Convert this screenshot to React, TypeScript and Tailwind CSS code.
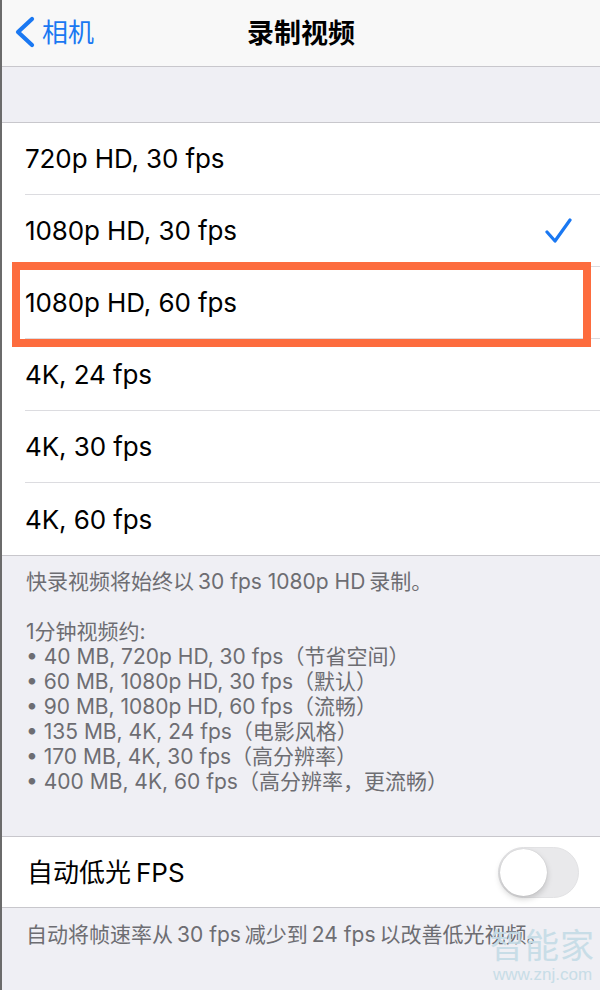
const font = "font-[Inter,'Noto_Sans_CJK_SC',sans-serif]";

const options = [
  { label: '720p HD, 30 fps', checked: false },
  { label: '1080p HD, 30 fps', checked: true },
  { label: '1080p HD, 60 fps', checked: false },
  { label: '4K, 24 fps', checked: false },
  { label: '4K, 30 fps', checked: false },
  { label: '4K, 60 fps', checked: false },
];

const sizes = [
  '40 MB, 720p HD, 30 fps（节省空间）',
  '60 MB, 1080p HD, 30 fps（默认）',
  '90 MB, 1080p HD, 60 fps（流畅）',
  '135 MB, 4K, 24 fps（电影风格）',
  '170 MB, 4K, 30 fps（高分辨率）',
  '400 MB, 4K, 60 fps（高分辨率，更流畅）',
];

// latin run between CJK chars gets a small gap like iOS does
function L({ children }: { children: React.ReactNode }) {
  return <span className="mx-[4px]">{children}</span>;
}

function Check() {
  return (
    <svg width="27" height="26" viewBox="0 0 27 26" fill="none">
      <path d="M2 14 L10 23 L25 2" stroke="#1a78f2" strokeWidth="3.2" strokeLinecap="round" strokeLinejoin="round" />
    </svg>
  );
}

function Toggle() {
  return (
    <div className="w-[81px] h-[51px] rounded-full bg-[#e9e9eb] border border-[#e2e2e4] p-[1px] flex items-center">
      <div className="w-[47px] h-[47px] rounded-full bg-white shadow-[0_3px_6px_rgba(0,0,0,0.18),0_0_1px_rgba(0,0,0,0.2)]" />
    </div>
  );
}

export default function App() {
  return (
    <div className={`relative w-[600px] h-[990px] bg-[#efeff4] border-l-2 border-[#6b6b6b] overflow-hidden ${font}`}>
      {/* nav bar */}
      <div className="h-[67px] bg-[#f8f8f8] border-b border-[#c8c7cc] grid grid-cols-[1fr_auto_1fr] items-center">
        <div className="flex items-center pl-[12px] text-[#1a78f2]">
          <svg width="24" height="34" viewBox="0 0 24 34" fill="none">
            <path d="M18 3 L4 16 L18 29" stroke="#1a78f2" strokeWidth="4.2" strokeLinecap="round" strokeLinejoin="round" />
          </svg>
          <span className="ml-[4px] text-[26px] leading-none">相机</span>
        </div>
        <div className="text-[27px] font-semibold text-black leading-none">录制视频</div>
        <div />
      </div>

      <div className="h-[55px]" />

      {/* format list */}
      <div className="bg-white border-t border-b border-[#c8c7cc]">
        {options.map((o, i) => (
          <div key={o.label} className="pl-[23px]">
            <div
              className={`h-[72px] flex items-center justify-between pr-[28px] ${
                i < options.length - 1 ? 'border-b border-[#dcdce0]' : ''
              }`}
            >
              <span className="text-[26px] tracking-[-0.1px] text-black">{o.label}</span>
              {o.checked && <Check />}
            </div>
          </div>
        ))}
      </div>

      <div className="pt-[13px] pb-[42px] px-[24px] text-[21px] leading-[25px] text-[#6d6d72]">
        <div>
          快录视频将始终以<L>30 fps 1080p HD</L>录制。
        </div>
        <div className="h-[25px]" />
        <div>1分钟视频约:</div>
        {sizes.map((s) => (
          <div key={s}>• {s}</div>
        ))}
      </div>

      {/* low light toggle */}
      <div className="bg-white border-t border-b border-[#c8c7cc] h-[72px] flex items-center justify-between pl-[25px] pr-[21px]">
        <span className="text-[26px] text-black">
          自动低光<span className="ml-[5px]">FPS</span>
        </span>
        <Toggle />
      </div>

      <div className="pt-[14px] px-[24px] text-[21px] leading-[25px] text-[#6d6d72]">
        自动将帧速率从<L>30 fps</L>减少到<L>24 fps</L>以改善低光视频。
      </div>

      {/* watermark + highlight */}
      <div className="absolute left-[488px] top-[926px] flex flex-col items-center text-[#c4dce6] opacity-90">
        <span className="text-[34px] leading-[40px] tracking-[1px]">智能家</span>
        <span className="text-[17px] leading-[18px] font-['Liberation_Sans',sans-serif]">www.znj.com</span>
      </div>
      <div className="absolute left-[10px] top-[262px] w-[579px] h-[85px] border-[8px] border-[#fd6c3e]" />
    </div>
  );
}
